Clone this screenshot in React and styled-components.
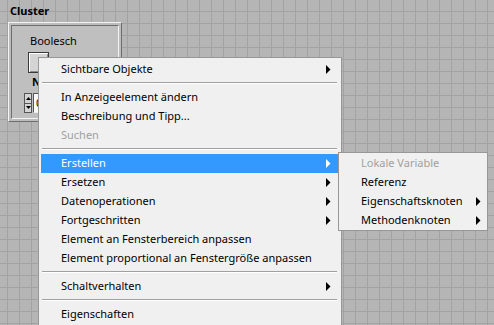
import React from "react";
import styled, { createGlobalStyle } from "styled-components";

const GlobalStyle = createGlobalStyle`
  html, body { margin: 0; padding: 0; }
  body { background: #b5b5b5; overflow: hidden; }
  * { box-sizing: border-box; }
`;

const FONT = `"Noto Sans", "Segoe UI", sans-serif`;

const Canvas = styled.div`
  position: relative;
  width: 494px;
  height: 325px;
  overflow: hidden;
  font-family: ${FONT};
  font-size: 11px;
  color: #000;
  background-color: #b5b5b5;
  background-image:
    linear-gradient(to right, #a2a2a2 1px, transparent 1px),
    linear-gradient(to bottom, #a2a2a2 1px, transparent 1px);
  background-size: 12px 12px;
  background-position: 7px 11px;
`;

/* ---------- Cluster front-panel object ---------- */
const Cluster = styled.div`
  position: absolute;
  left: 8px;
  top: 3px;
  display: flex;
  flex-direction: column;
`;

const ClusterLabel = styled.div`
  font-weight: bold;
  line-height: 15px;
  height: 19px;
  padding-left: 2px;
`;

const FrameOuter = styled.div`
  width: 114px;
  height: 100px;
  border: 1px solid;
  border-color: #f4f4f4 #6e6e6e #6e6e6e #f4f4f4;
  background: #bcbcbc;
  padding: 2px;
`;

const FrameInner = styled.div`
  height: 100%;
  border: 1px solid;
  border-color: #6e6e6e #f4f4f4 #f4f4f4 #6e6e6e;
  background: #bfbfbf;
  padding: 7px 0 0 16px;
  display: flex;
  flex-direction: column;
  align-items: flex-start;
`;

const ControlLabel = styled.div`
  line-height: 15px;
  font-weight: ${(p) => (p.$bold ? "bold" : "normal")};
  margin-left: ${(p) => p.$indent || 0}px;
  margin-top: ${(p) => p.$top || 0}px;
`;

const BoolButton = styled.div`
  width: 21px;
  height: 21px;
  margin-top: 4px;
  border: 1px solid #3a3a3a;
  background: #d4d4d4;
  box-shadow: inset 1px 1px 0 #ffffff, inset -1px -1px 0 #8c8c8c;
`;

const NumericRow = styled.div`
  display: flex;
  margin-top: 4px;
  margin-left: -4px;
  height: 20px;
`;

const Spinner = styled.div`
  width: 8px;
  display: flex;
  flex-direction: column;
  border: 1px solid #555;
  background: #d4d4d4;
`;

const SpinHalf = styled.div`
  flex: 1;
  display: flex;
  align-items: center;
  justify-content: center;
  &:first-child { border-bottom: 1px solid #555; }
`;

const NumDisplay = styled.div`
  margin-left: 1px;
  width: 40px;
  border: 1px solid;
  border-color: #555 #eee #eee #555;
  background: #fafafa;
  padding-left: 2px;
  line-height: 17px;
`;

/* ---------- Context menus ---------- */
const Menu = styled.div`
  position: absolute;
  left: ${(p) => p.$x}px;
  top: ${(p) => p.$y}px;
  width: ${(p) => p.$w}px;
  background: #f0f0f0;
  border: 1px solid #979797;
  padding: ${(p) => p.$pad};
  display: flex;
  flex-direction: column;
`;

const Item = styled.div`
  height: 19px;
  display: flex;
  align-items: center;
  justify-content: space-between;
  padding-left: 20px;
  padding-right: ${(p) => p.$arrowPad}px;
  padding-bottom: 2px;
  white-space: nowrap;
  color: ${(p) => (p.$active ? "#fff" : p.$disabled ? "#a0a0a0" : "#000")};
  background: ${(p) => (p.$active ? "#3399ff" : "transparent")};
`;

const Separator = styled.div`
  height: 9px;
  padding: 3px 1px 0;
  &::before {
    content: "";
    display: block;
    height: 1px;
    background: #a0a0a0;
    box-shadow: 0 1px 0 #ffffff;
  }
`;

const ArrowIcon = styled.svg`
  margin-top: 2px;
`;

const Arrow = ({ color }) => (
  <ArrowIcon width="5" height="9" viewBox="0 0 5 9">
    <polygon points="0,0 4.5,4.5 0,9" fill={color} />
  </ArrowIcon>
);

const Tri = ({ up }) => (
  <svg width="5" height="3" viewBox="0 0 5 3">
    <polygon points={up ? "0,3 2.5,0 5,3" : "0,0 2.5,3 5,0"} fill="#000" />
  </svg>
);

const mainItems = [
  { t: "Sichtbare Objekte", sub: true },
  "sep",
  { t: "In Anzeigeelement ändern" },
  { t: "Beschreibung und Tipp..." },
  { t: "Suchen", disabled: true },
  "sep",
  { t: "Erstellen", sub: true, active: true },
  { t: "Ersetzen", sub: true },
  { t: "Datenoperationen", sub: true },
  { t: "Fortgeschritten", sub: true },
  { t: "Element an Fensterbereich anpassen" },
  { t: "Element proportional an Fenstergröße anpassen" },
  "sep",
  { t: "Schaltverhalten", sub: true },
  "sep",
  { t: "Eigenschaften" },
];

const subItems = [
  { t: "Lokale Variable", disabled: true },
  { t: "Referenz" },
  { t: "Eigenschaftsknoten", sub: true },
  { t: "Methodenknoten", sub: true },
];

const renderItems = (items, arrowPad) =>
  items.map((it, i) =>
    it === "sep" ? (
      <Separator key={i} />
    ) : (
      <Item key={i} $active={it.active} $disabled={it.disabled} $arrowPad={arrowPad}>
        <span>{it.t}</span>
        {it.sub && <Arrow color={it.active ? "#fff" : "#000"} />}
      </Item>
    )
  );

export default function App() {
  return (
    <>
      <GlobalStyle />
      <Canvas>
        <Cluster>
          <ClusterLabel>Cluster</ClusterLabel>
          <FrameOuter>
            <FrameInner>
              <ControlLabel $indent={2}>Boolesch</ControlLabel>
              <BoolButton />
              <ControlLabel $bold $indent={4} $top={1}>Numerisch</ControlLabel>
              <NumericRow>
                <Spinner>
                  <SpinHalf><Tri up /></SpinHalf>
                  <SpinHalf><Tri /></SpinHalf>
                </Spinner>
                <NumDisplay>0</NumDisplay>
              </NumericRow>
            </FrameInner>
          </FrameOuter>
        </Cluster>

        <Menu $x={38} $y={57} $w={304} $pad="2px 3px 2px 2px">
          {renderItems(mainItems, 7)}
        </Menu>

        <Menu $x={338} $y={152} $w={150} $pad="1px 3px 0 2px">
          {renderItems(subItems, 3)}
        </Menu>
      </Canvas>
    </>
  );
}
